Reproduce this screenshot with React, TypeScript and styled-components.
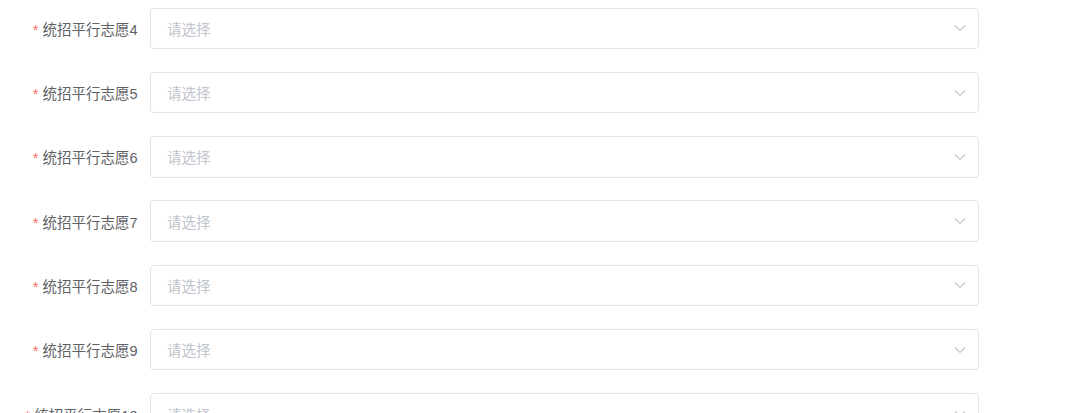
import styled, { createGlobalStyle } from 'styled-components';

const GlobalStyle = createGlobalStyle`
  body {
    margin: 0;
    background: #fff;
    font-family: "Liberation Sans", Arial, "Noto Sans CJK SC", sans-serif;
  }
`;

const Form = styled.div`
  display: flex;
  flex-direction: column;
  gap: 22.8px;
  padding-top: 7.5px;
  width: 1080px;
  height: 413px;
  box-sizing: border-box;
  overflow: hidden;
`;

const Row = styled.div`
  display: flex;
  align-items: center;
  flex-shrink: 0;
  height: 41.5px;
`;

const Label = styled.label`
  width: 150px;
  box-sizing: border-box;
  padding-right: 12.5px;
  text-align: right;
  white-space: nowrap;
  font-size: 14.5px;
  color: #606266;
  &::before {
    content: '*';
    color: #f56c6c;
    margin-right: 4px;
  }
`;

const Select = styled.div`
  width: 829px;
  height: 100%;
  box-sizing: border-box;
  border: 1px solid #e0e3e9;
  border-radius: 4px;
  display: flex;
  align-items: center;
  justify-content: space-between;
  padding: 0 12px 0 16px;
`;

const Placeholder = styled.span`
  font-size: 14.5px;
  color: #c0c4cc;
`;

const Arrow = () => (
  <svg width="12" height="8" viewBox="0 0 12 8">
    <path d="M1 1.5 L6 6.5 L11 1.5" fill="none" stroke="#c0c4cc" strokeWidth="1.1" />
  </svg>
);

const items = [4, 5, 6, 7, 8, 9, 10];

export default function App() {
  return (
    <>
      <GlobalStyle />
      <Form>
        {items.map((n) => (
          <Row key={n}>
            <Label>统招平行志愿{n}</Label>
            <Select>
              <Placeholder>请选择</Placeholder>
              <Arrow />
            </Select>
          </Row>
        ))}
      </Form>
    </>
  );
}
